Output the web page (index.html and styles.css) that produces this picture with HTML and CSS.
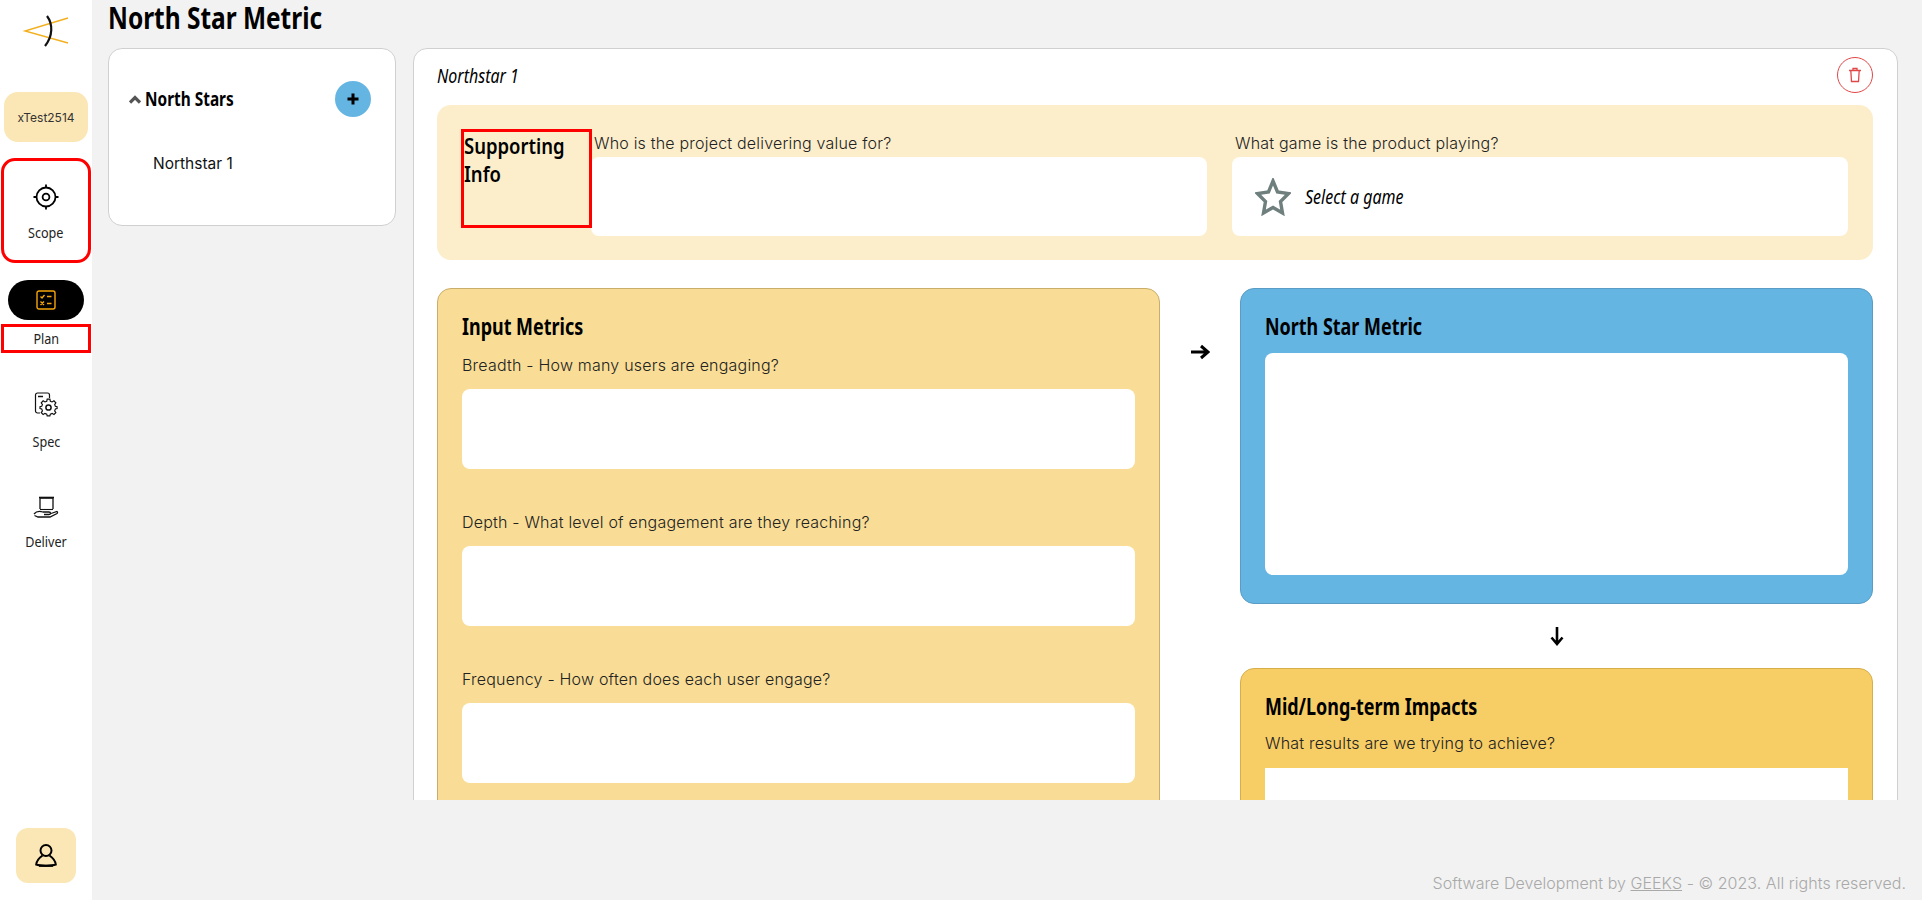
FILE: index.html
```html
<!DOCTYPE html>
<html lang="en">

<head>
    <meta charset="UTF-8">
    <title>North Star Metric</title>
    <link rel="stylesheet" href="styles.css">
</head>

<body>
    <aside class="sidebar">
        <div class="logo">
            <svg width="50" height="34" viewBox="0 0 50 34">
                <path d="M47 4 L4 17 L47 29" fill="none" stroke="#f2b01e" stroke-width="1.4"/>
                <path d="M26 2 C32 10 32 22 24 32" fill="none" stroke="#111" stroke-width="2.2"/>
            </svg>
        </div>
        <div class="workspace">xTest2514</div>

        <div class="nav-scope">
            <svg class="nav-icon" width="26" height="26" viewBox="0 0 26 26" fill="none" stroke="#000" stroke-width="1.8">
                <circle cx="13" cy="13" r="9.5"/>
                <circle cx="13" cy="13" r="3.4"/>
                <path d="M13 0.5V4M13 22V25.5M0.5 13H4M22 13H25.5"/>
            </svg>
            <span class="nav-label">Scope</span>
        </div>

        <div class="nav-pill">
            <svg width="20" height="20" viewBox="0 0 20 20" fill="none" stroke="#f5a50a" stroke-width="1.4">
                <rect x="1" y="1" width="18" height="18" rx="2"/>
                <path d="M4.5 6.5L6 8L8.5 5M11 6.5H15.5M4.5 11.5L8 15M8 11.5L4.5 15M11 13.5H15.5"/>
            </svg>
        </div>
        <div class="nav-plan"><span class="nav-label">Plan</span></div>

        <div class="nav-spec">
            <svg class="nav-icon" width="24" height="25" viewBox="0 0 24 25" fill="none" stroke="#111" stroke-width="1.2">
                <path d="M6 21H3.500a2 2 0 0 1-2-2V3a2 2 0 0 1 2-2h10a2 2 0 0 1 2 2v3"/>
                <path d="M4 4.500H9" stroke-width="1.500"/>
                <circle cx="14.500" cy="15.500" r="2.600" stroke-width="1.500"/>
                <path d="M13 6.500H16L16.500 8.800L18.500 9.600L20.500 8.400L22.600 10.600L21.300 12.500L22.100 14.500L24 15V17L22.100 17.500L21.300 19.500L22.600 21.400L20.500 23.500L18.500 22.300L16.500 23.200L16 25H13L12.500 23.200L10.500 22.300L8.500 23.500L6.400 21.400L7.700 19.500L6.900 17.500L5 17V15L6.900 14.500L7.700 12.500L6.400 10.600L8.500 8.400L10.500 9.600L12.500 8.800Z" stroke-width="1.300" transform="translate(1.500 1.300) scale(.9)"/>
            </svg>
            <span class="nav-label">Spec</span>
        </div>

        <div class="nav-deliver">
            <svg class="nav-icon" width="26" height="22" viewBox="0 0 26 22" fill="none" stroke="#111" stroke-width="1.3">
                <path d="M7 13V2H20V13"/>
                <path d="M6 1.500H21" stroke-width="1.600"/>
                <path d="M7 13.500H20" stroke-width="1.100"/>
                <path d="M1 18C3 15.500 7 15 10 16H16C18 16 18 18.500 16 18.500H11M18 17.500L24 15.500C25 16 24.500 17 24 17.500L17 21H5L1.500 19.500"/>
            </svg>
            <span class="nav-label">Deliver</span>
        </div>

        <div class="profile">
            <svg width="22" height="24" viewBox="0 0 22 24" fill="none" stroke="#000" stroke-width="2">
                <circle cx="11" cy="6.500" r="5.500"/>
                <path d="M7.500 11.500C4 14 1.500 17 1.200 20.500C5 22 17 22 20.800 20.500C20.500 17 18 14 14.500 11.500"/>
                <path d="M4 21.800H18" stroke-width="2"/>
            </svg>
        </div>
    </aside>

    <div class="page">
        <h1 class="page-title">North Star Metric</h1>

        <div class="content">
            <section class="stars-card">
                <div class="stars-head">
                    <svg class="chevron" width="12" height="9" viewBox="0 0 12 9">
                        <path d="M1 7.500L6 2.500L11 7.500" fill="none" stroke="#555" stroke-width="3.200"/>
                    </svg>
                    <span class="stars-title">North Stars</span>
                    <button class="add-btn">
                        <svg width="14" height="14" viewBox="0 0 14 14">
                            <path d="M7 1.500V12.500M1.500 7H12.500" stroke="#000" stroke-width="3"/>
                        </svg>
                    </button>
                </div>
                <div class="stars-item">Northstar 1</div>
            </section>

            <section class="main-card">
                <div class="card-head">
                    <span class="star-name">Northstar 1</span>
                    <button class="trash-btn">
                        <svg width="14" height="16" viewBox="0 0 14 16" fill="none" stroke="#e04848" stroke-width="1.300">
                            <path d="M1 3.500H13M5 3.500V1.500H9V3.500M2.800 3.500L3.500 14.500H10.500L11.200 3.500"/>
                        </svg>
                    </button>
                </div>

                <div class="support">
                    <h2 class="support-title"><span>Supporting Info</span></h2>
                    <div class="support-fields">
                        <div>
                            <p class="support-label">Who is the project delivering value for?</p>
                            <div class="support-box"></div>
                        </div>
                        <div>
                            <p class="support-label">What game is the product playing?</p>
                            <div class="support-box game-box">
                                <svg width="36" height="38" viewBox="0 0 36 38" fill="none" stroke="#6e7f7d" stroke-width="3.400">
                                    <path d="M18 3L22.500 14L33.500 15.500L25.500 23.500L27.500 35L18 29.500L8.500 35L10.500 23.500L2.500 15.500L13.500 14Z"/>
                                </svg>
                                <span class="game-text">Select a game</span>
                            </div>
                        </div>
                    </div>
                </div>

                <div class="metrics">
                    <div class="metric-card input-card">
                        <h3 class="metric-title">Input Metrics</h3>
                        <p class="prompt">Breadth - How many users are engaging?</p>
                        <div class="answer"></div>
                        <p class="prompt">Depth - What level of engagement are they reaching?</p>
                        <div class="answer"></div>
                        <p class="prompt">Frequency - How often does each user engage?</p>
                        <div class="answer"></div>
                    </div>

                    <div class="arrow-col">
                        <svg width="20" height="16" viewBox="0 0 20 16" fill="none" stroke="#000" stroke-width="3">
                            <path d="M1 8H18M11 2L18 8L11 14"/>
                        </svg>
                    </div>

                    <div class="right-col">
                        <div class="metric-card star-card">
                            <h3 class="metric-title">North Star Metric</h3>
                            <div class="star-answer"></div>
                        </div>
                        <div class="arrow-down">
                            <svg width="14" height="19" viewBox="0 0 14 19" fill="none" stroke="#000" stroke-width="2.600">
                                <path d="M7 0V17M1.500 10.500L7 17L12.500 10.500"/>
                            </svg>
                        </div>
                        <div class="metric-card impact-card">
                            <h3 class="metric-title">Mid/Long-term Impacts</h3>
                            <p class="impact-prompt">What results are we trying to achieve?</p>
                            <div class="impact-answer"></div>
                        </div>
                    </div>
                </div>
            </section>
        </div>

        <footer class="footer">Software Development by&nbsp;<u>GEEKS</u>&nbsp;- © 2023. All rights reserved.</footer>
    </div>
</body>

</html>
```

FILE: styles.css
```css
* {
    margin: 0;
    padding: 0;
    box-sizing: border-box;
}

body {
    display: flex;
    width: 1922px;
    height: 900px;
    overflow: hidden;
    background: #f2f2f2;
    font-family: Inter, "Liberation Sans", sans-serif;
    color: #222;
}

/* Sidebar */
.sidebar {
    flex: 0 0 92px;
    height: 900px;
    display: flex;
    flex-direction: column;
    align-items: center;
    background: #fff;
}

.logo {
    height: 92px;
    width: 100%;
    padding: 14px 0 0 21px;
}

.workspace {
    width: 84px;
    height: 50px;
    display: flex;
    align-items: center;
    justify-content: center;
    background: #fbe7b5;
    border-radius: 14px;
    font-size: 12px;
    color: #333;
}

/* no condensed face installed, so the narrow labels are squeezed */
.nav-label {
    display: inline-block;
    font-family: "Noto Sans", sans-serif;
    font-size: 14px;
    color: #222;
    transform: scaleX(0.9);
}

.nav-scope {
    width: 90px;
    height: 105px;
    margin-top: 16px;
    display: flex;
    flex-direction: column;
    align-items: center;
    border: 3px solid #f00;
    border-radius: 14px;
    padding-top: 23px;
}

.nav-scope .nav-label {
    margin-top: 13px;
}

.nav-pill {
    width: 76px;
    height: 40px;
    margin-top: 17px;
    display: flex;
    align-items: center;
    justify-content: center;
    background: #000;
    border-radius: 20px;
}

.nav-plan {
    width: 90px;
    height: 29px;
    margin-top: 4px;
    display: flex;
    align-items: center;
    justify-content: center;
    border: 3px solid #f00;
}

.nav-spec,
.nav-deliver {
    display: flex;
    flex-direction: column;
    align-items: center;
}

.nav-spec {
    margin-top: 39px;
}

.nav-spec .nav-label {
    margin-top: 15px;
}

.nav-deliver {
    margin-top: 45px;
}

.nav-deliver .nav-label {
    margin-top: 14px;
}

.nav-icon {
    display: block;
}

.profile {
    width: 60px;
    height: 55px;
    margin-top: auto;
    margin-bottom: 17px;
    display: flex;
    align-items: center;
    justify-content: center;
    background: #fbe7b5;
    border-radius: 12px;
}

/* Page */
.page {
    width: 1830px;
    display: flex;
    flex-direction: column;
    padding-left: 16px;
}

.page-title {
    height: 48px;
    font-family: "Noto Sans", sans-serif;
    font-size: 30px;
    line-height: 36px;
    font-weight: 700;
    color: #000;
    transform: scaleX(0.815);
    transform-origin: left center;
}

.content {
    display: flex;
    align-items: flex-start;
    gap: 17px;
    height: 752px;
    overflow: hidden;
}

.stars-card {
    flex: 0 0 288px;
    height: 178px;
    background: #fff;
    border: 1px solid #d0d0d0;
    border-radius: 14px;
    padding: 32px 24px 0 20px;
}

.stars-head {
    display: flex;
    align-items: center;
    height: 36px;
}

.chevron {
    margin-right: 4px;
}

.stars-title {
    position: relative;
    top: -1px;
    font-family: "Noto Sans", sans-serif;
    font-size: 20px;
    font-weight: 700;
    color: #000;
    transform: scaleX(0.77);
    transform-origin: left center;
}

.add-btn {
    width: 36px;
    height: 36px;
    margin-left: auto;
    display: flex;
    align-items: center;
    justify-content: center;
    background: #65b5e3;
    border: 0;
    border-radius: 50%;
}

.stars-item {
    margin: 37px 0 0 24px;
    font-size: 15.500px;
    line-height: 20px;
    color: #111;
}

.main-card {
    width: 1485px;
    height: 1100px;
    flex: none;
    background: #fff;
    border: 1px solid #d0d0d0;
    border-radius: 14px;
    padding: 8px 24px 0 23px;
}

.card-head {
    display: flex;
    justify-content: space-between;
    align-items: center;
    height: 36px;
    margin-bottom: 12px;
}

.star-name,
.game-text {
    font-family: "Noto Sans", sans-serif;
    font-style: italic;
    font-size: 20px;
    color: #000;
    transform: scaleX(0.8);
    transform-origin: left center;
}

.trash-btn {
    width: 36px;
    height: 36px;
    display: flex;
    align-items: center;
    justify-content: center;
    background: #fff;
    border: 1px solid #e04848;
    border-radius: 50%;
}

/* Supporting info */
.support {
    display: flex;
    height: 155px;
    padding: 24px 25px 0 24px;
    background: #fdeecb;
    border-radius: 14px;
}

.support-title {
    position: relative;
    z-index: 1;
    flex: 0 0 131px;
    min-width: 0;
    height: 99px;
    margin-right: -1px;
    border: 3px solid #f00;
    font-family: "Noto Sans", sans-serif;
    font-size: 21px;
    line-height: 28px;
    font-weight: 600;
    color: #000;
}

.support-title span {
    display: block;
    width: 122px;
    transform: scaleX(0.88);
    transform-origin: left center;
}

.support-fields {
    flex: 1;
    min-width: 0;
    display: grid;
    grid-template-columns: 1fr 1fr;
    gap: 25px;
}

.support-label {
    height: 28px;
    padding-left: 3px;
    font-size: 16px;
    line-height: 28px;
    font-weight: 300;
    letter-spacing: 0.2px;
}

.support-box {
    height: 79px;
    background: #fff;
    border-radius: 8px;
}

.game-box {
    display: flex;
    align-items: center;
    gap: 14px;
    padding: 0 0 0 23px;
}

/* Metric cards */
.metrics {
    display: flex;
    align-items: flex-start;
    margin-top: 28px;
}

.metric-card {
    border: 1px solid #c9ad6b;
    border-radius: 14px;
    padding: 22px 24px 24px;
}

.metric-title {
    font-family: "Noto Sans", sans-serif;
    font-size: 23px;
    line-height: 30px;
    font-weight: 700;
    color: #000;
    transform: scaleX(0.78);
    transform-origin: left center;
}

.input-card {
    flex: 0 0 723px;
    background: #f9dd96;
}

.prompt,
.impact-prompt {
    font-size: 16px;
    line-height: 24px;
    font-weight: 300;
    letter-spacing: 0.2px;
}

.prompt {
    margin-top: 12px;
}

.answer {
    height: 80px;
    margin-top: 12px;
    margin-bottom: 41px;
    background: #fff;
    border-radius: 8px;
}

.arrow-col {
    flex: 0 0 80px;
    display: flex;
    justify-content: center;
    padding-top: 56px;
}

.right-col {
    flex: 0 0 633px;
}

.star-card {
    height: 316px;
    background: #65b5e3;
    border-color: #5a9cc4;
}

.star-answer {
    height: 222px;
    margin-top: 12px;
    background: #fff;
    border-radius: 8px;
}

.arrow-down {
    height: 64px;
    display: flex;
    align-items: center;
    justify-content: center;
}

.impact-card {
    background: #f7cd66;
    border-color: #d8ae4c;
}

.impact-prompt {
    margin-top: 10px;
}

.impact-answer {
    height: 200px;
    margin-top: 13px;
    background: #fff;
}

.footer {
    height: 100px;
    display: flex;
    justify-content: flex-end;
    align-items: flex-end;
    padding: 0 16px 5px 0;
    font-size: 16px;
    line-height: 24px;
    font-weight: 300;
    letter-spacing: 0.05px;
    color: #a9a9a9;
}
```
